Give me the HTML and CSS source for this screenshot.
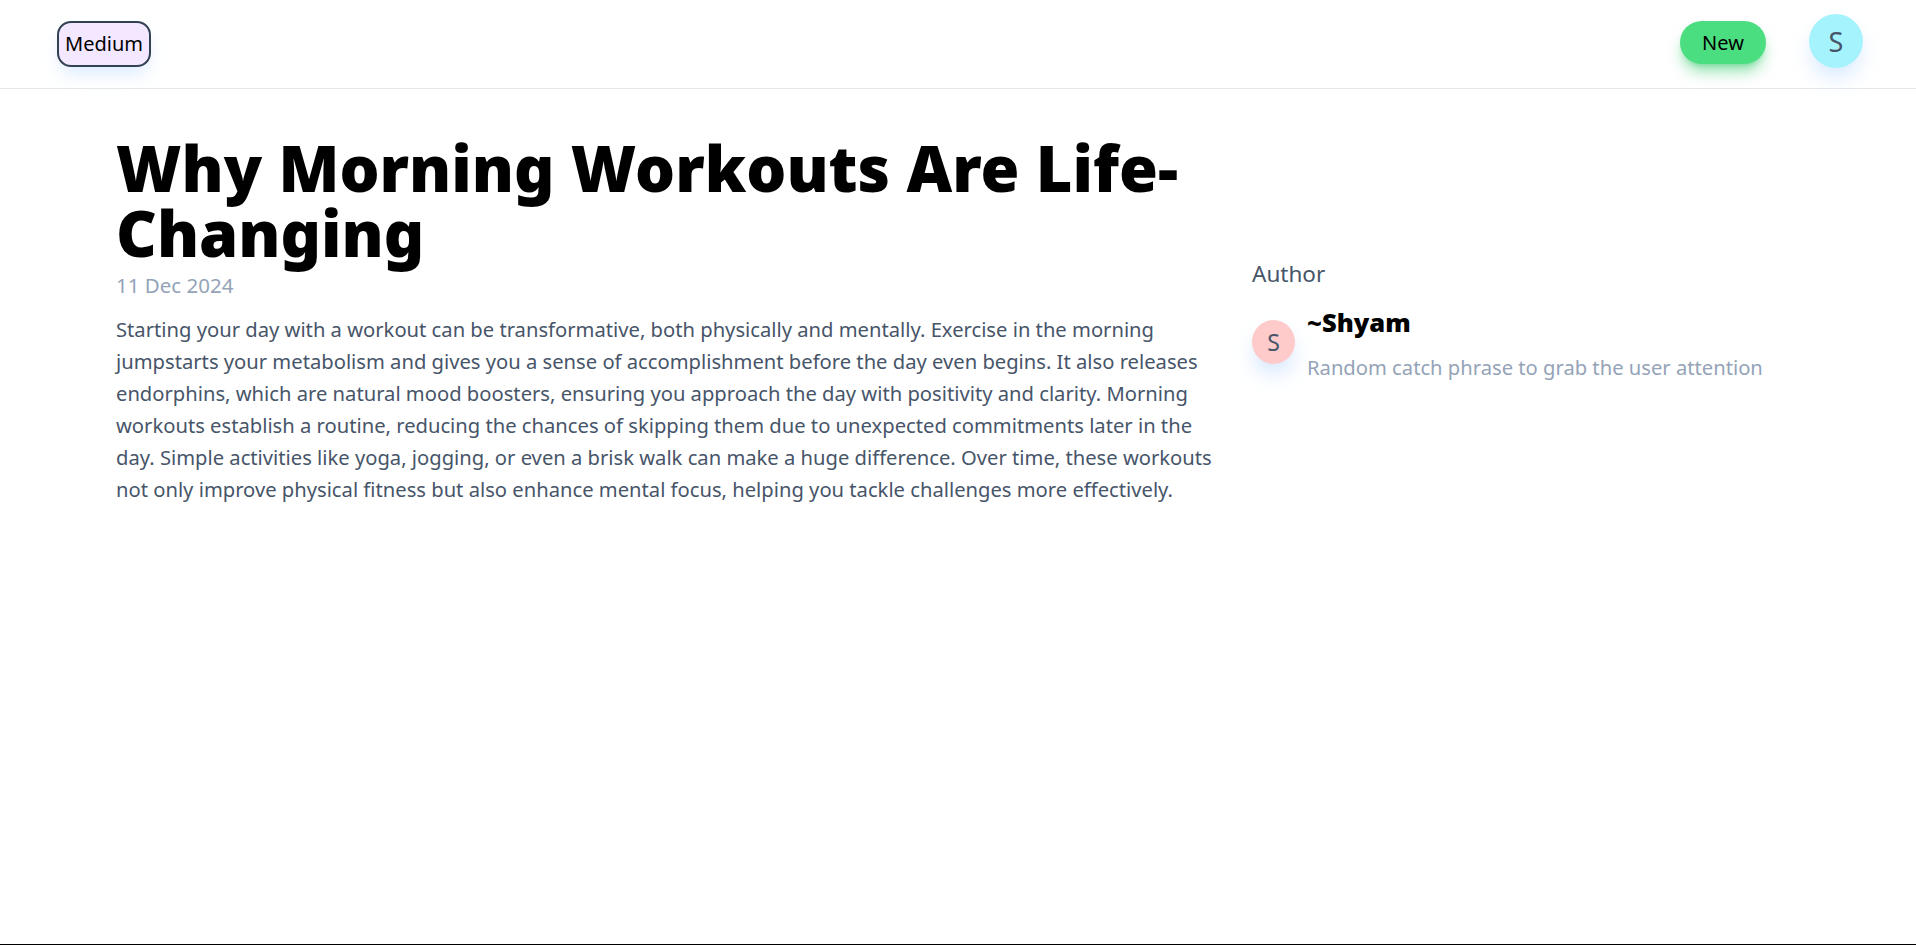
FILE: index.html
```html
<!DOCTYPE html>
<html lang="en">
<head>
<meta charset="utf-8">
<title>Why Morning Workouts Are Life-Changing</title>
<link rel="stylesheet" href="styles.css">
</head>
<body>
<div class="page">
  <header class="appbar">
    <div class="brand">Medium</div>
    <div class="appbar-right">
      <button class="btn-new">New</button>
      <div class="avatar-top">S</div>
    </div>
  </header>
  <main class="layout">
    <article class="post">
      <h1 class="post-title">Why Morning Workouts Are Life-Changing</h1>
      <div class="post-date">11 Dec 2024</div>
      <p class="post-body">Starting your day with a workout can be transformative, both physically and mentally. Exercise in the morning jumpstarts your metabolism and gives you a sense of accomplishment before the day even begins. It also releases endorphins, which are natural mood boosters, ensuring you approach the day with positivity and clarity. Morning workouts establish a routine, reducing the chances of skipping them due to unexpected commitments later in the day. Simple activities like yoga, jogging, or even a brisk walk can make a huge difference. Over time, these workouts not only improve physical fitness but also enhance mental focus, helping you tackle challenges more effectively.</p>
    </article>
    <aside class="author">
      <div class="author-label">Author</div>
      <div class="author-row">
        <div class="avatar-author">S</div>
        <div class="author-info">
          <div class="author-name">~Shyam</div>
          <div class="author-phrase">Random catch phrase to grab the user attention</div>
        </div>
      </div>
    </aside>
  </main>
</div>
</body>
</html>
```
FILE: styles.css
```css
html, body {
  margin: 0;
  padding: 0;
  background: #ffffff;
}
body {
  font-family: "Noto Sans", "Open Sans", sans-serif;
  overflow: hidden;
}
.page {
  box-sizing: border-box;
  height: 945px;
  border-bottom: 1px solid #000;
}
.appbar {
  box-sizing: border-box;
  height: 89px;
  border-bottom: 1px solid #e5e7eb;
  display: flex;
  align-items: center;
  justify-content: space-between;
  padding: 0 53px 6px 57px;
}
.brand {
  box-sizing: border-box;
  width: 94px;
  height: 46px;
  margin-top: 5px;
  display: flex;
  align-items: center;
  justify-content: center;
  border: 2px solid #334155;
  border-radius: 14px;
  background: #f3e8ff;
  color: #000;
  font-size: 20px;
  box-shadow: 0 10px 18px -4px rgba(191, 219, 254, 0.6);
}
.appbar-right {
  display: flex;
  align-items: center;
  gap: 43px;
}
.btn-new {
  box-sizing: border-box;
  width: 86px;
  height: 43px;
  padding: 0;
  border: none;
  border-radius: 999px;
  background: #4ade80;
  color: #000;
  font-family: "Noto Sans", "Open Sans", sans-serif;
  font-size: 20px;
  box-shadow: 0 10px 15px -3px rgba(34, 197, 94, 0.5), 0 4px 6px -4px rgba(34, 197, 94, 0.5);
  margin-top: 2px;
}
.avatar-top {
  width: 54px;
  height: 54px;
  border-radius: 50%;
  background: #a5f3fc;
  color: #475569;
  font-size: 27px;
  display: flex;
  align-items: center;
  justify-content: center;
  box-shadow: 0 12px 22px -4px rgba(191, 219, 254, 0.7);
}
.layout {
  display: grid;
  grid-template-columns: 1112px 1fr;
  column-gap: 24px;
  padding: 46px 0 0 116px;
}
.post-title {
  margin: 0;
  font-family: "Noto Sans", sans-serif;
  font-weight: 900;
  font-size: 63px;
  line-height: 65px;
  color: #000;
}
.post-date {
  margin-top: 6px;
  font-size: 20.5px;
  line-height: 28px;
  color: #94a3b8;
}
.post-body {
  margin: 14px 0 0;
  font-size: 20.2px;
  line-height: 32px;
  color: #475569;
}
.author {
  padding-top: 123px;
}
.author-label {
  font-size: 22.5px;
  line-height: 32px;
  color: #475569;
}
.author-row {
  display: flex;
  align-items: flex-start;
  gap: 12px;
  margin-top: 16px;
}
.avatar-author {
  width: 43px;
  height: 44px;
  margin-top: 14px;
  border-radius: 50%;
  background: #fecaca;
  color: #475569;
  font-size: 23px;
  display: flex;
  align-items: center;
  justify-content: center;
  box-shadow: 0 12px 22px -4px rgba(191, 219, 254, 0.8);
  flex-shrink: 0;
}
.author-name {
  font-family: "Noto Sans", sans-serif;
  font-weight: 900;
  font-size: 25.5px;
  line-height: 32px;
  color: #000;
}
.author-phrase {
  margin-top: 15px;
  font-size: 20.2px;
  line-height: 28px;
  color: #94a3b8;
}
```
